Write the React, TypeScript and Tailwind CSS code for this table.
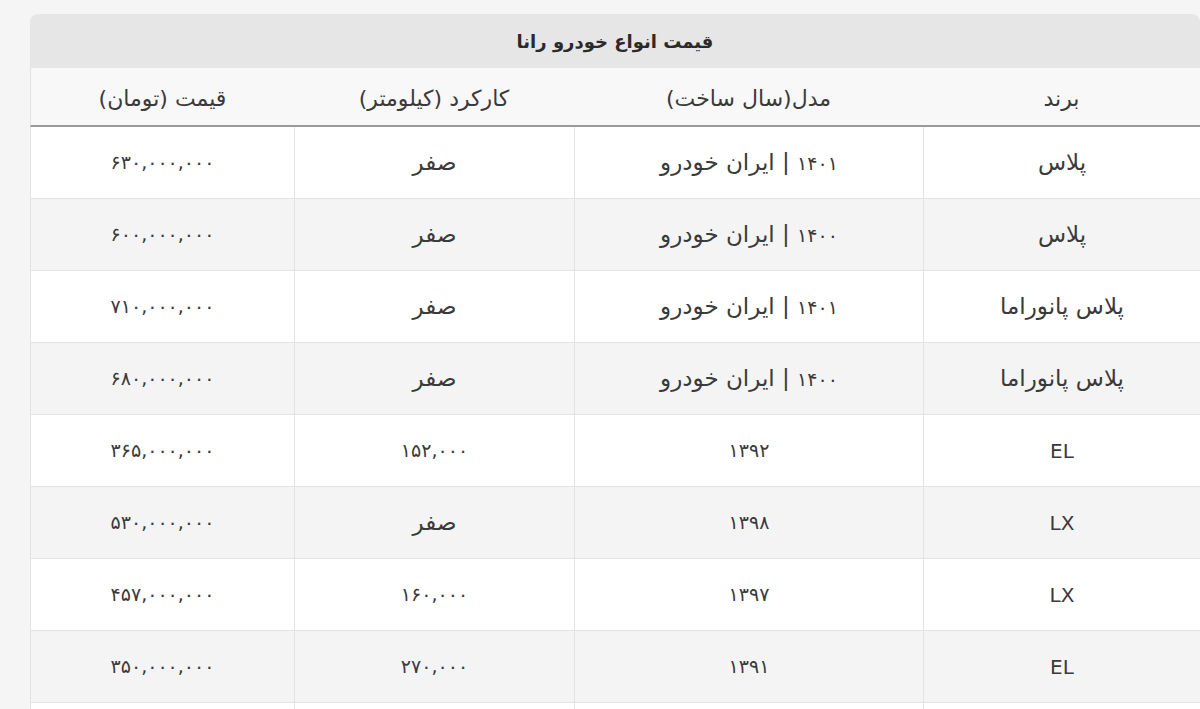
import React from "react";

const rows: [string, string, string, string][] = [
  ["پلاس", "۱۴۰۱ | ایران خودرو", "صفر", "۶۳۰,۰۰۰,۰۰۰"],
  ["پلاس", "۱۴۰۰ | ایران خودرو", "صفر", "۶۰۰,۰۰۰,۰۰۰"],
  ["پلاس پانوراما", "۱۴۰۱ | ایران خودرو", "صفر", "۷۱۰,۰۰۰,۰۰۰"],
  ["پلاس پانوراما", "۱۴۰۰ | ایران خودرو", "صفر", "۶۸۰,۰۰۰,۰۰۰"],
  ["EL", "۱۳۹۲", "۱۵۲,۰۰۰", "۳۶۵,۰۰۰,۰۰۰"],
  ["LX", "۱۳۹۸", "صفر", "۵۳۰,۰۰۰,۰۰۰"],
  ["LX", "۱۳۹۷", "۱۶۰,۰۰۰", "۴۵۷,۰۰۰,۰۰۰"],
  ["EL", "۱۳۹۱", "۲۷۰,۰۰۰", "۳۵۰,۰۰۰,۰۰۰"],
  ["", "", "", ""],
];

function Txt({ s }: { s: string }) {
  const parts = s.match(/[۰-۹,]+|[A-Za-z]+|[^۰-۹,A-Za-z]+/g) || [];
  return (
    <span className="whitespace-pre">
      {parts.map((p, i) => {
        if (/^[۰-۹,]+$/.test(p))
          return (
            <span key={i} className="text-[19px] tracking-[-1px]">
              {p}
            </span>
          );
        if (/^[A-Za-z]+$/.test(p))
          return (
            <span key={i} className="text-[20px]">
              {p}
            </span>
          );
        return (
          <span key={i} className="text-[23px]">
            {p}
          </span>
        );
      })}
    </span>
  );
}

export default function App() {
  return (
    <div
      className="w-[1200px] h-[709px] overflow-hidden bg-[#f5f5f5] pt-[14px] pl-[30px]"
      style={{ fontFamily: '"DejaVu Sans", "Liberation Sans", sans-serif' }}
    >
      <div dir="rtl" className="w-[1170px] text-[#3a3a3a]">
        <div className="h-[54px] rounded-t-[8px] bg-[#e6e6e6] flex items-center justify-center text-[18px] font-bold text-[#2a2a2a]">
          قیمت انواع خودرو رانا
        </div>
        <div className="grid grid-cols-[277px_349px_280px_1fr] h-[59px] bg-[#f8f8f8] border-b-2 border-[#9a9a9a] border-l border-l-[#e2e2e2] text-[22px] leading-none">
          <div className="flex items-center justify-center pt-[4px]">برند</div>
          <div className="flex items-center justify-center pt-[4px]">مدل(سال ساخت)</div>
          <div className="flex items-center justify-center pt-[4px]">کارکرد (کیلومتر)</div>
          <div className="flex items-center justify-center pt-[4px]">قیمت (تومان)</div>
        </div>
        {rows.map((r, i) => (
          <div
            key={i}
            className={`grid grid-cols-[277px_349px_280px_1fr] h-[72px] border-b border-[#e3e3e3] border-l border-l-[#e2e2e2] ${
              i % 2 === 1 ? "bg-[#f4f4f4]" : "bg-white"
            }`}
          >
            <div className="flex items-center justify-center border-l border-[#e3e3e3]">
              <Txt s={r[0]} />
            </div>
            <div className="flex items-center justify-center border-l border-[#e3e3e3]">
              <Txt s={r[1]} />
            </div>
            <div className="flex items-center justify-center border-l border-[#e3e3e3]">
              <Txt s={r[2]} />
            </div>
            <div className="flex items-center justify-center">
              <Txt s={r[3]} />
            </div>
          </div>
        ))}
      </div>
    </div>
  );
}
